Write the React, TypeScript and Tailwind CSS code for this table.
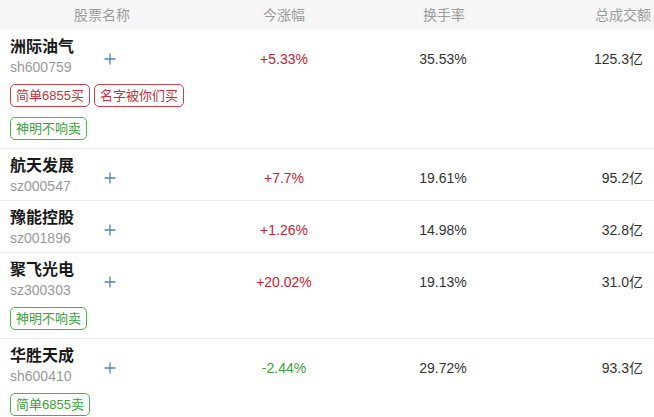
const FONT = { fontFamily: '"Liberation Sans", Arial, "Noto Sans CJK SC", sans-serif' };

type Tag = { text: string; tone: "red" | "green" };

interface Stock {
  name: string;
  code: string;
  change: string;
  turnover: string;
  amount: string;
  tags: Tag[];
}

const stocks: Stock[] = [
  {
    name: "洲际油气",
    code: "sh600759",
    change: "+5.33%",
    turnover: "35.53%",
    amount: "125.3亿",
    tags: [
      { text: "简单6855买", tone: "red" },
      { text: "名字被你们买", tone: "red" },
      { text: "神明不响卖", tone: "green" },
    ],
  },
  { name: "航天发展", code: "sz000547", change: "+7.7%", turnover: "19.61%", amount: "95.2亿", tags: [] },
  { name: "豫能控股", code: "sz001896", change: "+1.26%", turnover: "14.98%", amount: "32.8亿", tags: [] },
  {
    name: "聚飞光电",
    code: "sz300303",
    change: "+20.02%",
    turnover: "19.13%",
    amount: "31.0亿",
    tags: [{ text: "神明不响卖", tone: "green" }],
  },
  {
    name: "华胜天成",
    code: "sh600410",
    change: "-2.44%",
    turnover: "29.72%",
    amount: "93.3亿",
    tags: [{ text: "简单6855卖", tone: "green" }],
  },
];

function PlusIcon() {
  return (
    <svg width="12" height="12" viewBox="0 0 12 12" className="text-[#4f86c6]">
      <path d="M6 0.5v11M0.5 6h11" stroke="currentColor" strokeWidth="1.3" fill="none" />
    </svg>
  );
}

function StockTag({ tag }: { tag: Tag }) {
  const tone =
    tag.tone === "red"
      ? "border-[#c8414b] text-[#c8323c]"
      : "border-[#4fb04f] text-[#3aa33a]";
  return (
    <span
      className={`inline-flex h-[23px] items-center rounded-[5px] border px-[5px] text-[13px] leading-none ${tone}`}
    >
      {tag.text}
    </span>
  );
}

function Row({ s }: { s: Stock }) {
  const up = s.change.startsWith("+");
  return (
    <div className="grid grid-cols-[226px_116px_202px_1fr] border-b border-[#ececec] bg-white pt-[6px]">
      <div className="flex flex-col pl-[10px]">
        <div className="flex">
          <div className="w-[94px]">
            <div className="text-[16px] font-bold leading-[22px] text-[#1a1a1a]">{s.name}</div>
            <div className="text-[14px] leading-[18px] text-[#9a9a9a]">{s.code}</div>
          </div>
          <div className="flex items-center pt-[6px]">
            <PlusIcon />
          </div>
        </div>
        {s.tags.length > 0 && (
          <div className="mt-[8px] flex w-[200px] flex-wrap gap-x-[4px] gap-y-[10px] pb-[8px]">
            {s.tags.map((t) => (
              <StockTag key={t.text} tag={t} />
            ))}
          </div>
        )}
        {s.tags.length === 0 && <div className="h-[5px]" />}
      </div>
      <div
        className={`pt-[14px] text-center text-[14px] leading-[18px] ${up ? "text-[#c8202e]" : "text-[#3c9e3c]"}`}
      >
        {s.change}
      </div>
      <div className="pt-[14px] text-center text-[14px] leading-[18px] text-[#333]">{s.turnover}</div>
      <div className="pr-[11px] pt-[14px] text-right text-[14px] leading-[18px] text-[#333]">{s.amount}</div>
    </div>
  );
}

export default function App() {
  return (
    <div className="h-[417px] w-[654px] overflow-hidden bg-white" style={FONT}>
      <div className="grid h-[30px] grid-cols-[204px_160px_160px_1fr] items-center bg-[#f6f6f6] text-[14px] text-[#9c9c9c]">
        <div className="text-center">股票名称</div>
        <div className="text-center">今涨幅</div>
        <div className="text-center">换手率</div>
        <div className="pr-[3px] text-right">总成交额</div>
      </div>
      {stocks.map((s) => (
        <Row key={s.code} s={s} />
      ))}
    </div>
  );
}
